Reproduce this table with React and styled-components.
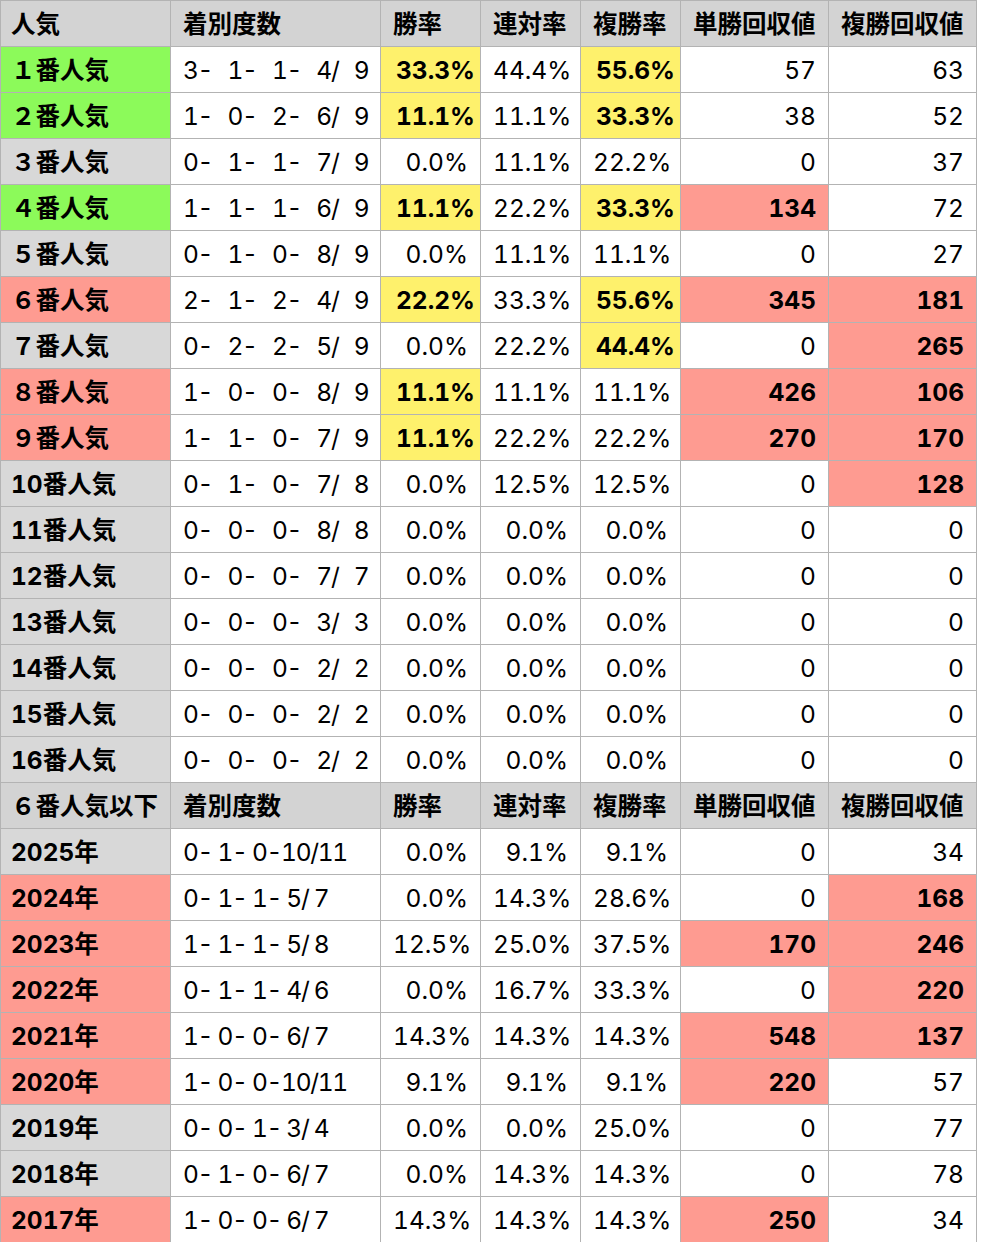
import React from "react";
import styled, { createGlobalStyle, css } from "styled-components";

const Global = createGlobalStyle`
  html, body { margin: 0; padding: 0; background: #ffffff; }
  body { font-family: Inter, "Noto Sans CJK JP", sans-serif; color: #000; }
`;

const TONES = {
  head: "#d3d3d3",
  gray: "#d8d8d8",
  green: "#8cfa5a",
  yellow: "#fef16c",
  pink: "#fe9b91",
  none: "#ffffff",
};

const Table = styled.table`
  width: 976px;
  table-layout: fixed;
  border-collapse: collapse;
  font-family: Inter, "Noto Sans CJK JP", sans-serif;
  font-size: 24.5px;
  line-height: 1;
  font-variant-numeric: tabular-nums;
  font-feature-settings: "tnum" 1;
`;

const Row = styled.tr`
  height: 46px;
`;

const Base = css`
  border: 1px solid #b3b3b3;
  padding: 2px 12px 0;
  white-space: pre;
  overflow: visible;
  box-sizing: border-box;
  height: 46px;
  vertical-align: middle;
  background: ${(p) => TONES[p.$tone || "none"]};
`;

const HeadCell = styled.th`
  ${Base};
  text-align: left;
  font-weight: 700;
  padding-left: ${(p) => (p.$first ? "10px" : "12px")};
`;

const NameCell = styled.td`
  ${Base};
  text-align: left;
  font-weight: 700;
  padding-left: 10px;
`;

const RecordCell = styled.td`
  ${Base};
  text-align: left;
  padding-left: 12px;
  letter-spacing: -1.3px;
  word-spacing: ${(p) => (p.$wide ? "10px" : "0")};
`;

const NumCell = styled.td`
  ${Base};
  text-align: right;
  font-weight: ${(p) => (p.$bold ? 700 : 400)};
  padding-right: ${(p) => (p.$bold && p.$pct ? "5px" : "12px")};
`;

const COLS = [170, 210, 100, 100, 100, 148, 148];

const HEAD = ["着別度数", "勝率", "連対率", "複勝率", "単勝回収値", "複勝回収値"];

// [name, nameTone, record, win, winY, ren, fuku, fukuY, tan, tanP, fret, fretP]
const POP = [
  ["１番人気", "green", "3- 1- 1- 4/ 9", "33.3%", 1, "44.4%", "55.6%", 1, "57", 0, "63", 0],
  ["２番人気", "green", "1- 0- 2- 6/ 9", "11.1%", 1, "11.1%", "33.3%", 1, "38", 0, "52", 0],
  ["３番人気", "gray", "0- 1- 1- 7/ 9", "0.0%", 0, "11.1%", "22.2%", 0, "0", 0, "37", 0],
  ["４番人気", "green", "1- 1- 1- 6/ 9", "11.1%", 1, "22.2%", "33.3%", 1, "134", 1, "72", 0],
  ["５番人気", "gray", "0- 1- 0- 8/ 9", "0.0%", 0, "11.1%", "11.1%", 0, "0", 0, "27", 0],
  ["６番人気", "pink", "2- 1- 2- 4/ 9", "22.2%", 1, "33.3%", "55.6%", 1, "345", 1, "181", 1],
  ["７番人気", "gray", "0- 2- 2- 5/ 9", "0.0%", 0, "22.2%", "44.4%", 1, "0", 0, "265", 1],
  ["８番人気", "pink", "1- 0- 0- 8/ 9", "11.1%", 1, "11.1%", "11.1%", 0, "426", 1, "106", 1],
  ["９番人気", "pink", "1- 1- 0- 7/ 9", "11.1%", 1, "22.2%", "22.2%", 0, "270", 1, "170", 1],
  ["10番人気", "gray", "0- 1- 0- 7/ 8", "0.0%", 0, "12.5%", "12.5%", 0, "0", 0, "128", 1],
  ["11番人気", "gray", "0- 0- 0- 8/ 8", "0.0%", 0, "0.0%", "0.0%", 0, "0", 0, "0", 0],
  ["12番人気", "gray", "0- 0- 0- 7/ 7", "0.0%", 0, "0.0%", "0.0%", 0, "0", 0, "0", 0],
  ["13番人気", "gray", "0- 0- 0- 3/ 3", "0.0%", 0, "0.0%", "0.0%", 0, "0", 0, "0", 0],
  ["14番人気", "gray", "0- 0- 0- 2/ 2", "0.0%", 0, "0.0%", "0.0%", 0, "0", 0, "0", 0],
  ["15番人気", "gray", "0- 0- 0- 2/ 2", "0.0%", 0, "0.0%", "0.0%", 0, "0", 0, "0", 0],
  ["16番人気", "gray", "0- 0- 0- 2/ 2", "0.0%", 0, "0.0%", "0.0%", 0, "0", 0, "0", 0],
];

const YEARS = [
  ["2025年", "gray", "0- 1- 0-10/11", "0.0%", 0, "9.1%", "9.1%", 0, "0", 0, "34", 0],
  ["2024年", "pink", "0- 1- 1- 5/ 7", "0.0%", 0, "14.3%", "28.6%", 0, "0", 0, "168", 1],
  ["2023年", "pink", "1- 1- 1- 5/ 8", "12.5%", 0, "25.0%", "37.5%", 0, "170", 1, "246", 1],
  ["2022年", "pink", "0- 1- 1- 4/ 6", "0.0%", 0, "16.7%", "33.3%", 0, "0", 0, "220", 1],
  ["2021年", "pink", "1- 0- 0- 6/ 7", "14.3%", 0, "14.3%", "14.3%", 0, "548", 1, "137", 1],
  ["2020年", "pink", "1- 0- 0-10/11", "9.1%", 0, "9.1%", "9.1%", 0, "220", 1, "57", 0],
  ["2019年", "gray", "0- 0- 1- 3/ 4", "0.0%", 0, "0.0%", "25.0%", 0, "0", 0, "77", 0],
  ["2018年", "gray", "0- 1- 0- 6/ 7", "0.0%", 0, "14.3%", "14.3%", 0, "0", 0, "78", 0],
  ["2017年", "pink", "1- 0- 0- 6/ 7", "14.3%", 0, "14.3%", "14.3%", 0, "250", 1, "34", 0],
];

function HeaderRow({ first }) {
  return (
    <Row>
      <HeadCell $tone="head" $first>
        {first}
      </HeadCell>
      {HEAD.map((h) => (
        <HeadCell key={h} $tone="head">
          {h}
        </HeadCell>
      ))}
    </Row>
  );
}

function DataRow({ d, wide }) {
  const [name, tone, rec, win, winY, ren, fuku, fukuY, tan, tanP, fret, fretP] = d;
  return (
    <Row>
      <NameCell $tone={tone}>{name}</NameCell>
      <RecordCell $wide={wide}>{rec}</RecordCell>
      <NumCell $pct $bold={!!winY} $tone={winY ? "yellow" : "none"}>
        {win}
      </NumCell>
      <NumCell $pct>{ren}</NumCell>
      <NumCell $pct $bold={!!fukuY} $tone={fukuY ? "yellow" : "none"}>
        {fuku}
      </NumCell>
      <NumCell $bold={!!tanP} $tone={tanP ? "pink" : "none"}>
        {tan}
      </NumCell>
      <NumCell $bold={!!fretP} $tone={fretP ? "pink" : "none"}>
        {fret}
      </NumCell>
    </Row>
  );
}

export default function App() {
  return (
    <>
      <Global />
      <Table>
        <colgroup>
          {COLS.map((w, i) => (
            <col key={i} style={{ width: w }} />
          ))}
        </colgroup>
        <tbody>
          <HeaderRow first="人気" />
          {POP.map((d) => (
            <DataRow key={d[0]} d={d} wide />
          ))}
          <HeaderRow first="６番人気以下" />
          {YEARS.map((d) => (
            <DataRow key={d[0]} d={d} />
          ))}
        </tbody>
      </Table>
    </>
  );
}
